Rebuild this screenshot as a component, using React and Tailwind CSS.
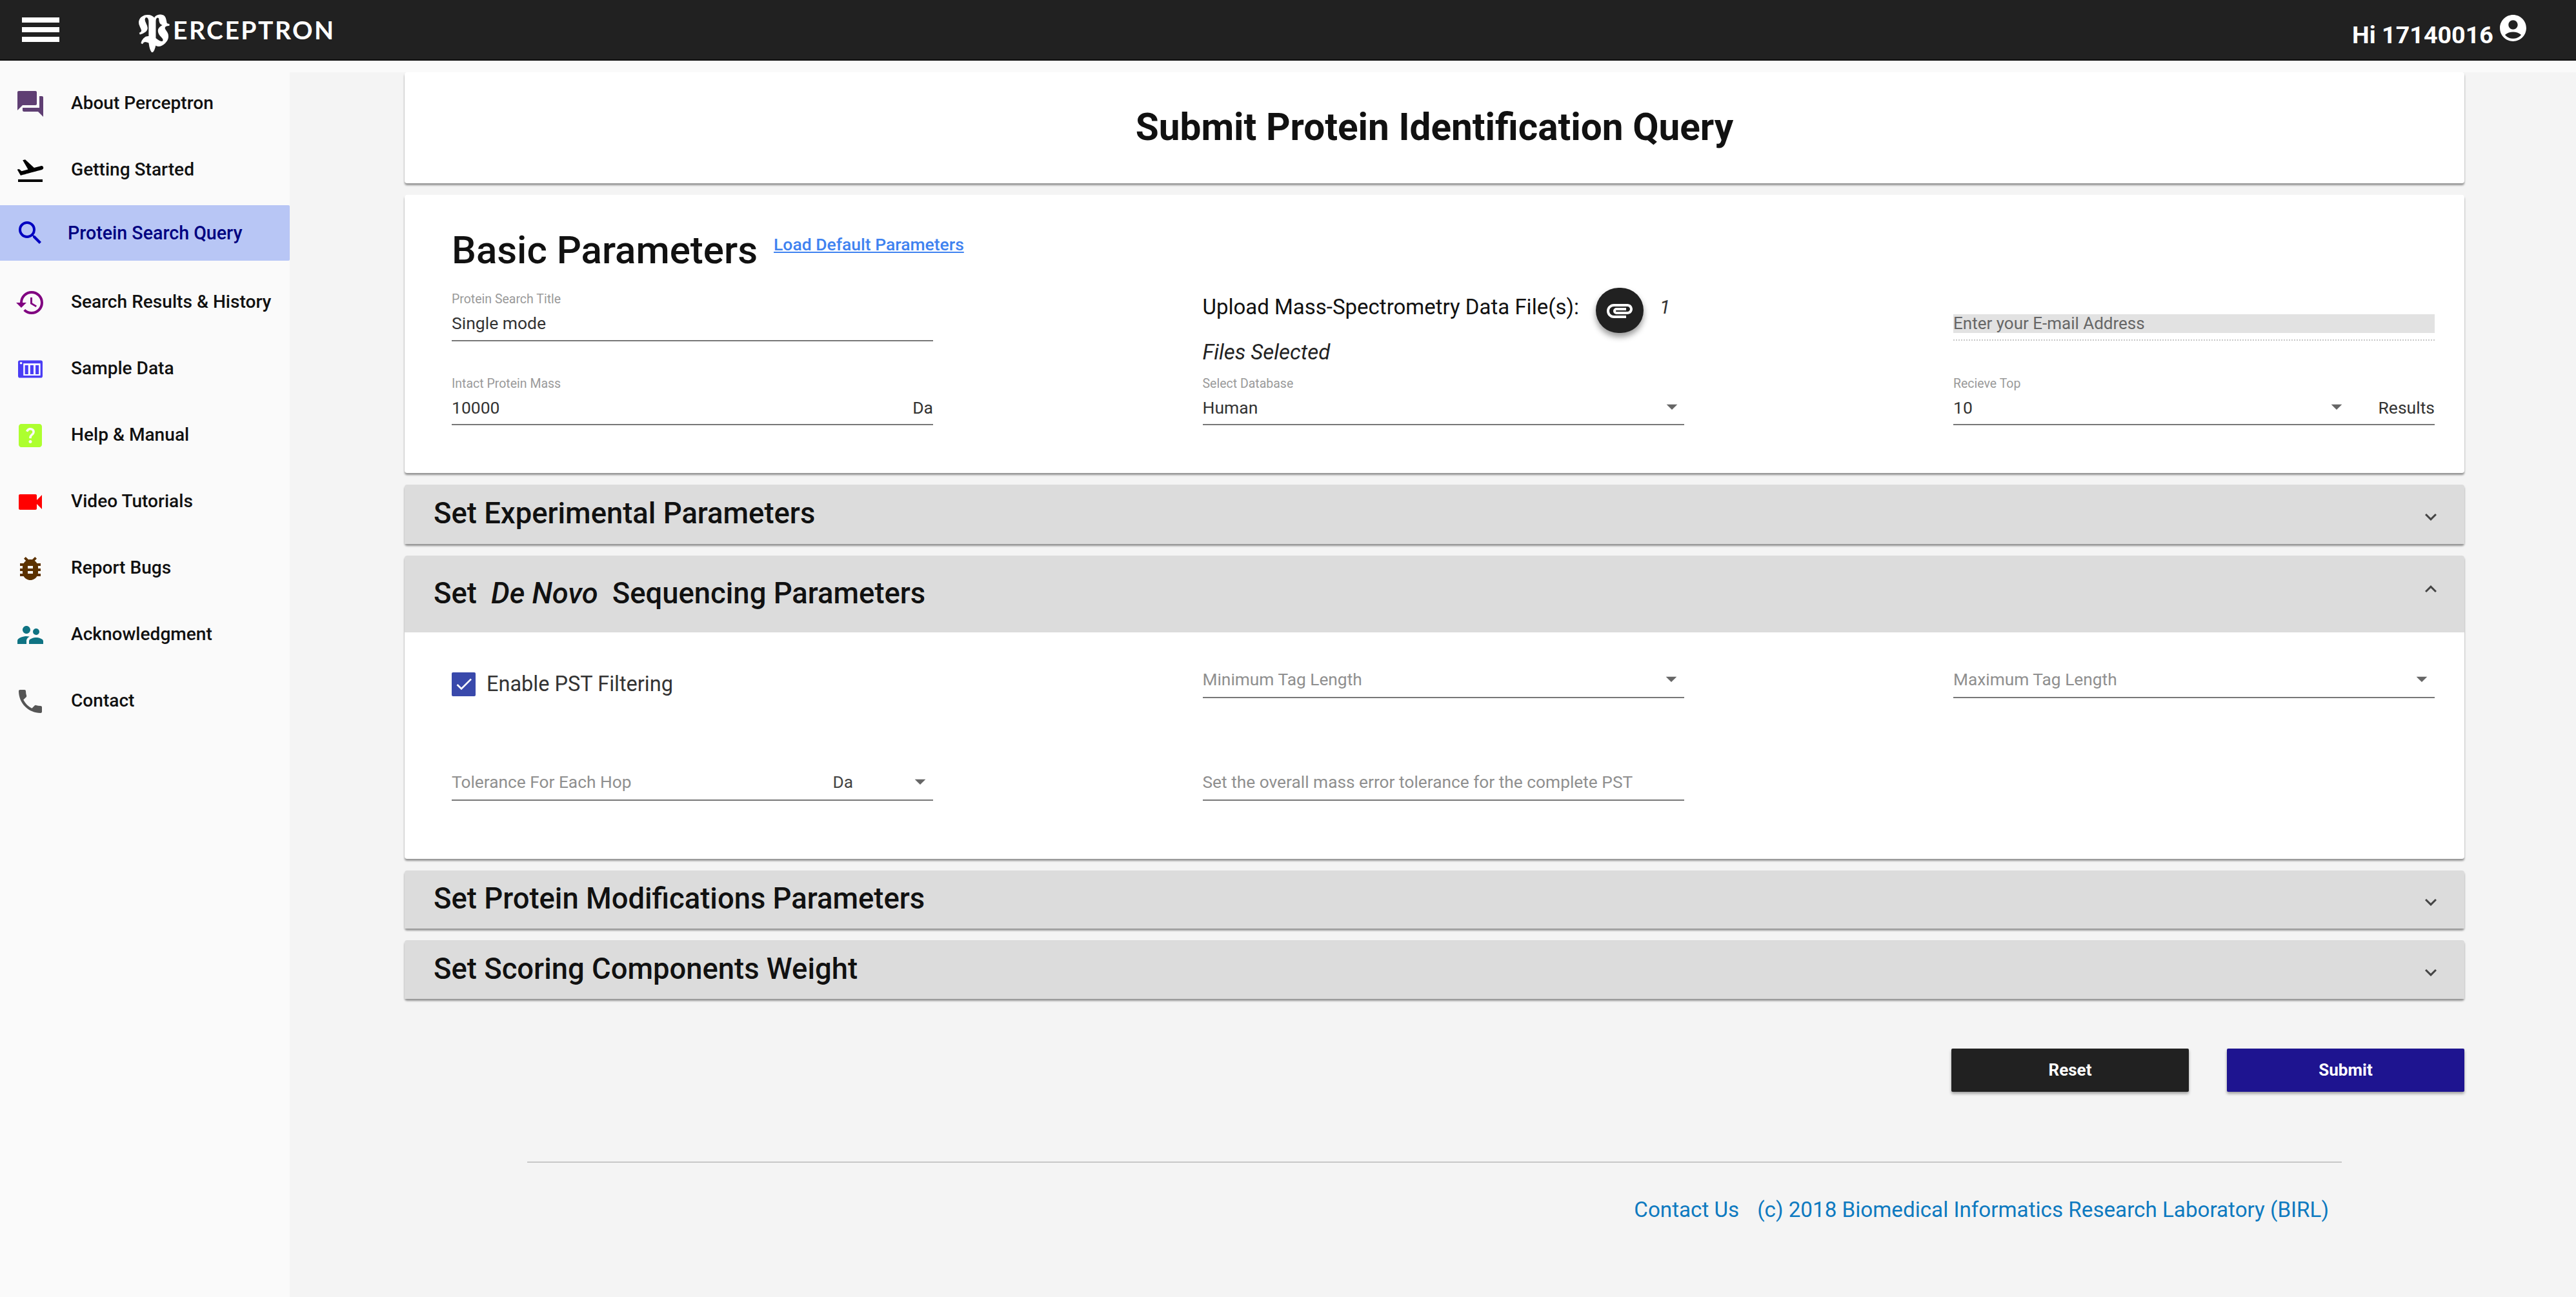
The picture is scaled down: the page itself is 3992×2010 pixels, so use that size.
import React from "react";
import {
  MdQuestionAnswer,
  MdFlightTakeoff,
  MdSearch,
  MdHistory,
  MdHelpCenter,
  MdVideocam,
  MdBugReport,
  MdSupervisorAccount,
  MdPhone,
  MdAccountCircle,
  MdAttachment,
  MdExpandMore,
  MdExpandLess,
  MdCheck,
  MdArrowDropDown,
} from "react-icons/md";

// rounded panel with three slots, react-icons has nothing this close
function SampleIcon({ className }) {
  return (
    <svg viewBox="0 0 24 24" className={className}>
      <rect x="2.5" y="5.2" width="19" height="13.6" rx="1.4" fill="currentColor" />
      <circle cx="4.8" cy="7.4" r="0.9" fill="#fff" />
      <rect x="6.6" y="7.6" width="13.2" height="9.4" fill="#fff" />
      <rect x="7.8" y="9" width="2.6" height="7" fill="currentColor" />
      <rect x="11.9" y="9" width="2.6" height="7" fill="currentColor" />
      <rect x="16" y="9" width="2.6" height="7" fill="currentColor" />
    </svg>
  );
}

const navItems = [
  { label: "About Perceptron", icon: MdQuestionAnswer, color: "text-[#5f3f73]" },
  { label: "Getting Started", icon: MdFlightTakeoff, color: "text-black" },
  { label: "Protein Search Query", icon: MdSearch, color: "text-[#0000c0]", active: true },
  { label: "Search Results & History", icon: MdHistory, color: "text-[#800080]" },
  { label: "Sample Data", icon: SampleIcon, color: "text-[#4a3df5]" },
  { label: "Help & Manual", icon: MdHelpCenter, color: "text-[#adff2f]" },
  { label: "Video Tutorials", icon: MdVideocam, color: "text-[#ff0000]" },
  { label: "Report Bugs", icon: MdBugReport, color: "text-[#5c3200]" },
  { label: "Acknowledgment", icon: MdSupervisorAccount, color: "text-[#0f7383]" },
  { label: "Contact", icon: MdPhone, color: "text-[#555555]" },
];

function Sidebar() {
  return (
    <aside className="w-[449px] shrink-0 pt-[15px]">
      {navItems.map((item) =>
        item.active ? (
          <div key={item.label} className="flex items-center h-[86px] mt-[3px] mb-[13px] bg-[#b8c6f5] rounded-r-[2px]">
            <item.icon className={`w-[48px] h-[48px] ml-[23px] shrink-0 ${item.color}`} />
            <span className="ml-[34px] text-[28.6px] font-medium text-[#000080]">{item.label}</span>
          </div>
        ) : (
          <div key={item.label} className="flex items-center h-[103px]">
            <item.icon className={`w-[48px] h-[48px] ml-[23px] shrink-0 ${item.color}`} />
            <span className="ml-[39px] text-[28.1px] font-medium text-[#111111]">{item.label}</span>
          </div>
        )
      )}
    </aside>
  );
}

function Field({ label, value, suffix, caret, className = "" }) {
  return (
    <div className={`h-[77px] border-b-[2px] border-[#777777] ${className}`}>
      <div className="text-[19.5px] leading-[24px] text-[#9a9a9a] mt-[1px]">{label}</div>
      <div className="flex items-center mt-[7px] h-[36px] text-[26.5px] text-[#333333]">
        <span className="flex-1">{value}</span>
        {caret && <MdArrowDropDown className="w-[40px] h-[40px] text-[#666666] -mr-[1px] -mt-[4px]" />}
        {suffix && <span className="ml-[46px]">{suffix}</span>}
      </div>
    </div>
  );
}

function PlainSelect({ label, value }) {
  return (
    <div className="flex items-center h-[48px] pb-[6px] border-b-[2px] border-[#777777] text-[26.3px]">
      <span className="flex-1 text-[#8f8f8f]">{label}</span>
      {value && <span className="text-[#444444] mr-[84px]">{value}</span>}
      <MdArrowDropDown className="w-[40px] h-[40px] text-[#666666] -mt-[4px]" />
    </div>
  );
}

function AccordionHead({ title, open, tall }) {
  return (
    <div className={`flex items-center justify-between bg-[#dcdcdc] pl-[45px] pr-[38px] rounded-t-[4px] ${tall}`}>
      <h3 className="text-[45.4px] font-medium text-[#111111] leading-none -mt-[2px]">{title}</h3>
      {open ? (
        <MdExpandLess className="w-[36px] h-[36px] text-[#444444] -mt-[16px] mr-[-4px]" />
      ) : (
        <MdExpandMore className="w-[36px] h-[36px] text-[#444444] mt-[8px] mr-[-4px]" />
      )}
    </div>
  );
}

export default function App() {
  return (
    <div className="min-h-screen bg-[#fafafa] font-['Roboto',sans-serif] flex flex-col">
      <header className="h-[94px] shrink-0 bg-[#212121] border-b-[2px] border-[#111111] flex items-center text-white">
        <div className="ml-[34px] w-[58px] flex flex-col gap-[7px]">
          <div className="h-[8px] bg-white"></div>
          <div className="h-[8px] bg-white"></div>
          <div className="h-[8px] bg-white"></div>
        </div>
        <div className="ml-[118px] flex items-center">
          <span className="font-['DejaVu_Serif','Liberation_Serif',serif] text-[68px] leading-none font-bold w-[54px] text-center">𝕻</span>
          <span className="ml-[4px] font-['Lato',sans-serif] font-bold text-[39px] leading-none tracking-[2.5px]">ERCEPTRON</span>
        </div>
        <div className="ml-auto flex items-center mr-[73px]">
          <span className="text-[37.7px] font-bold mt-[16px]">Hi 17140016</span>
          <MdAccountCircle className="w-[49px] h-[49px] ml-[6px] -mt-[4px]" />
        </div>
      </header>

      <div className="flex flex-1">
        <Sidebar />
        <main className="flex-1 mt-[18px] bg-[#f4f4f4] pl-[178px] pr-[173px]">
          <div className="h-[172px] bg-white rounded-[4px] shadow-[0_3px_3px_rgba(0,0,0,0.4)] flex items-center justify-center">
            <h1 className="text-[58.5px] font-bold text-[#111111]">Submit Protein Identification Query</h1>
          </div>

          <section className="mt-[18px] h-[431px] bg-white rounded-[4px] shadow-[0_3px_3px_rgba(0,0,0,0.4)] pl-[73px] pr-[46px] pt-[56px]">
            <div className="flex items-baseline h-[96px]">
              <h2 className="text-[60px] font-medium text-[#111111] leading-none">Basic Parameters</h2>
              <a className="ml-[25px] text-[26.5px] font-medium text-[#3f82f0] underline relative -top-[20px]">Load Default Parameters</a>
            </div>
            <div className="grid grid-cols-[746px_746px_746px] justify-between">
              <div className="h-[99px] -mt-[3px]">
                <Field label="Protein Search Title" value="Single mode" />
              </div>
              <div className="h-[99px] flex items-center -mt-[3px] relative">
                <span className="text-[33px] text-[#111111] -mt-[50px]">Upload Mass-Spectrometry Data File(s):</span>
                <div className="w-[74px] h-[70px] ml-[26px] -mt-[40px] rounded-full bg-[#212121] flex items-center justify-center shadow-[0_6px_10px_rgba(0,0,0,0.4)] shrink-0">
                  <MdAttachment className="w-[48px] h-[48px] text-white" />
                </div>
                <span className="text-[30px] italic text-[#333333] ml-[25px] -mt-[50px]">1</span>
                <span className="absolute left-0 top-[70px] text-[33px] italic text-[#222222]">Files Selected</span>
              </div>
              <div className="h-[99px] pt-[33px]">
                <div className="h-[29px] bg-[#e2e2e2] text-[26px] leading-[29px] text-[#666666]">Enter your E-mail Address</div>
                <div className="mt-[10px] border-b-[2px] border-dotted border-[#c8c8c8]"></div>
              </div>
              <Field label="Intact Protein Mass" value="10000" suffix="Da" className="mt-[29px]" />
              <Field label="Select Database" value="Human" caret className="mt-[29px]" />
              <Field label="Recieve Top" value="10" caret suffix="Results" className="mt-[29px]" />
            </div>
          </section>

          <section className="mt-[18px] rounded-[4px] shadow-[0_3px_3px_rgba(0,0,0,0.4)]">
            <AccordionHead title="Set Experimental Parameters" tall="h-[92px]" />
          </section>

          <section className="mt-[18px] bg-white rounded-[4px] shadow-[0_3px_3px_rgba(0,0,0,0.4)]">
            <AccordionHead
              open
              tall="h-[119px]"
              title={
                <>
                  Set<em className="mx-[22px] font-medium">De Novo</em>Sequencing Parameters
                </>
              }
            />
            <div className="h-[351px] pl-[73px] pr-[46px] pt-[61px] grid grid-cols-[746px_746px_746px] justify-between content-start">
              <label className="flex items-center h-[38px] gap-[17px]">
                <span className="w-[37px] h-[37px] bg-[#3949ab] rounded-[2px] flex items-center justify-center">
                  <MdCheck className="w-[32px] h-[32px] text-white" />
                </span>
                <span className="text-[32.5px] text-[#333333]">Enable PST Filtering</span>
              </label>
              <div className="-mt-[7px] h-[40px]">
                <PlainSelect label="Minimum Tag Length" />
              </div>
              <div className="-mt-[7px] h-[40px]">
                <PlainSelect label="Maximum Tag Length" />
              </div>
              <div className="mt-[114px]">
                <PlainSelect label="Tolerance For Each Hop" value="Da" />
              </div>
              <div className="mt-[114px]">
                <div className="flex items-center h-[48px] pb-[6px] border-b-[2px] border-[#777777] text-[26.3px] text-[#8f8f8f]">
                  Set the overall mass error tolerance for the complete PST
                </div>
              </div>
            </div>
          </section>

          <section className="mt-[18px] rounded-[4px] shadow-[0_3px_3px_rgba(0,0,0,0.4)]">
            <AccordionHead title="Set Protein Modifications Parameters" tall="h-[90px]" />
          </section>

          <section className="mt-[18px] rounded-[4px] shadow-[0_3px_3px_rgba(0,0,0,0.4)]">
            <AccordionHead title="Set Scoring Components Weight" tall="h-[91px]" />
          </section>

          <div className="mt-[77px] flex justify-end gap-[59px]">
            <button className="w-[368px] h-[67px] bg-[#212121] text-white text-[26px] font-bold rounded-[2px] shadow-[0_3px_4px_rgba(0,0,0,0.35)]">Reset</button>
            <button className="w-[368px] h-[67px] bg-[#1e1490] text-white text-[26px] font-bold rounded-[2px] shadow-[0_3px_4px_rgba(0,0,0,0.35)]">Submit</button>
          </div>

          <footer className="mt-[108px] ml-[190px] mr-[190px] border-t-[2px] border-[#c8c8c8] pt-[52px] pr-[20px] flex justify-end gap-[28px] text-[33.2px] text-[#0e7ac0] leading-[42px]">
            <span>Contact Us</span>
            <span>(c) 2018 Biomedical Informatics Research Laboratory (BIRL)</span>
          </footer>
        </main>
      </div>
    </div>
  );
}
